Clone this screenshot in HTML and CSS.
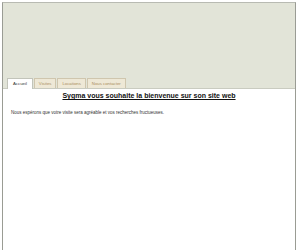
FILE: index.html
```html
<!DOCTYPE html>
<html lang="fr">
<head>
    <meta charset="UTF-8">
    <meta name="viewport" content="width=device-width, initial-scale=1.0">
    <title>Sygma</title>
    <link rel="stylesheet" href="styles.css">
</head>
<body>
    <div class="page">
        <div class="header"></div>
        <ul class="tabs">
            <li class="tab active">Accueil</li>
            <li class="tab">Visites</li>
            <li class="tab">Locations</li>
            <li class="tab">Nous contacter</li>
        </ul>
        <div class="content">
            <h1>Sygma vous souhaite la bienvenue sur son site web</h1>
            <p>Nous espérons que votre visite sera agréable et vos recherches fructueuses.</p>
        </div>
    </div>
</body>
</html>
```

FILE: styles.css
```css
body {
    font-family: "Liberation Sans", Arial, sans-serif;
    background-color: #fff;
    margin: 0;
    padding: 0;
}
.page {
    margin: 2px 1px 0 2px;
    border-left: 1px solid #9a9c94;
    border-top: 1px solid #b8bab2;
    border-right: 1px solid #9a9c94;
    height: 248px;
    background-color: #fff;
}
.header {
    height: 75px;
    background-color: #e2e4d8;
}
.tabs {
    list-style: none;
    margin: 0;
    padding: 0 0 0 4px;
    display: flex;
    gap: 1px;
    background-color: #e2e4d8;
    border-bottom: 1px solid #c9cbc0;
}
.tab {
    font-size: 4.3px;
    padding: 2px 4px 1px;
    height: 6px;
    line-height: 6px;
    color: #a98c5c;
    background-color: #eee8d6;
    border: 1px solid #cfc6ae;
    border-bottom: none;
}
.tab.active {
    color: #333;
    background-color: #fff;
    border-color: #c2c4ba;
    margin-bottom: -1px;
    padding: 2px 5px 2px;
}
.content {
    padding: 0 8px;
}
h1 {
    margin: 0;
    padding-top: 3px;
    font-size: 7px;
    text-align: center;
    text-decoration: underline;
    color: #111;
}
p {
    margin: 11px 0 0;
    font-size: 4.5px;
    color: #333;
}
```
